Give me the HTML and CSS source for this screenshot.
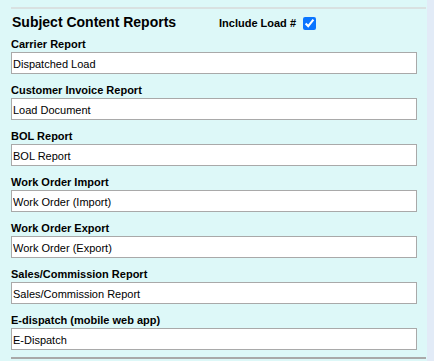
FILE: index.html
```html
<!DOCTYPE html>
<html>
<head>
<meta charset="utf-8">
<link rel="stylesheet" href="styles.css">
</head>
<body>
<div class="page">
  <div class="panel">
    <section class="reports">
      <div class="header">
        <h2 class="title">Subject Content Reports</h2>
        <label class="include">Include Load # <input type="checkbox" class="check" checked></label>
      </div>
      <div class="field">
        <label class="field-label">Carrier Report</label>
        <input class="field-input" type="text" value="Dispatched Load">
      </div>
      <div class="field">
        <label class="field-label">Customer Invoice Report</label>
        <input class="field-input" type="text" value="Load Document">
      </div>
      <div class="field">
        <label class="field-label">BOL Report</label>
        <input class="field-input" type="text" value="BOL Report">
      </div>
      <div class="field">
        <label class="field-label">Work Order Import</label>
        <input class="field-input" type="text" value="Work Order (Import)">
      </div>
      <div class="field">
        <label class="field-label">Work Order Export</label>
        <input class="field-input" type="text" value="Work Order (Export)">
      </div>
      <div class="field">
        <label class="field-label">Sales/Commission Report</label>
        <input class="field-input" type="text" value="Sales/Commission Report">
      </div>
      <div class="field">
        <label class="field-label">E-dispatch (mobile web app)</label>
        <input class="field-input" type="text" value="E-Dispatch">
      </div>
    </section>
  </div>
</div>
</body>
</html>
```

FILE: styles.css
```css
html, body {
  margin: 0;
  padding: 0;
}
body {
  background: #e2ebf7;
  font-family: "Liberation Sans", Arial, sans-serif;
  color: #000;
}
.page {
  display: flex;
  height: 361px;
}
.panel {
  width: 427px;
  background: #ddf8f8;
  padding-top: 7px;
  box-sizing: border-box;
}
.reports {
  margin-left: 11px;
  width: 415px;
  border-top: 2px solid #d9e1e1;
  border-bottom: 2px solid #a9a9a9;
  padding: 5px 0 7px 0;
}
.header {
  display: flex;
  align-items: center;
  height: 16px;
  margin-bottom: 8px;
}
.title {
  margin: 0 0 0 1px;
  width: 207px;
  font-size: 14px;
  font-weight: bold;
  line-height: 16px;
}
.include {
  display: flex;
  align-items: center;
  font-size: 11px;
  font-weight: bold;
  line-height: 13px;
  margin-top: 3px;
}
.check {
  width: 13px;
  height: 13px;
  margin: 0 0 0 7px;
  accent-color: #0a75ff;
}
.field {
  display: flex;
  flex-direction: column;
  margin-bottom: 10px;
}
.field:last-child {
  margin-bottom: 0;
}
.field-label {
  font-size: 11px;
  font-weight: bold;
  line-height: 13px;
  margin-bottom: 1px;
}
.field-input {
  box-sizing: border-box;
  width: 406px;
  height: 22px;
  margin: 0;
  border: 1px solid #a9a9a9;
  border-radius: 0;
  padding: 1px 1px 0 1px;
  background: #fff;
  font-family: "Liberation Sans", Arial, sans-serif;
  font-size: 11px;
  color: #000;
  outline: none;
}
```
